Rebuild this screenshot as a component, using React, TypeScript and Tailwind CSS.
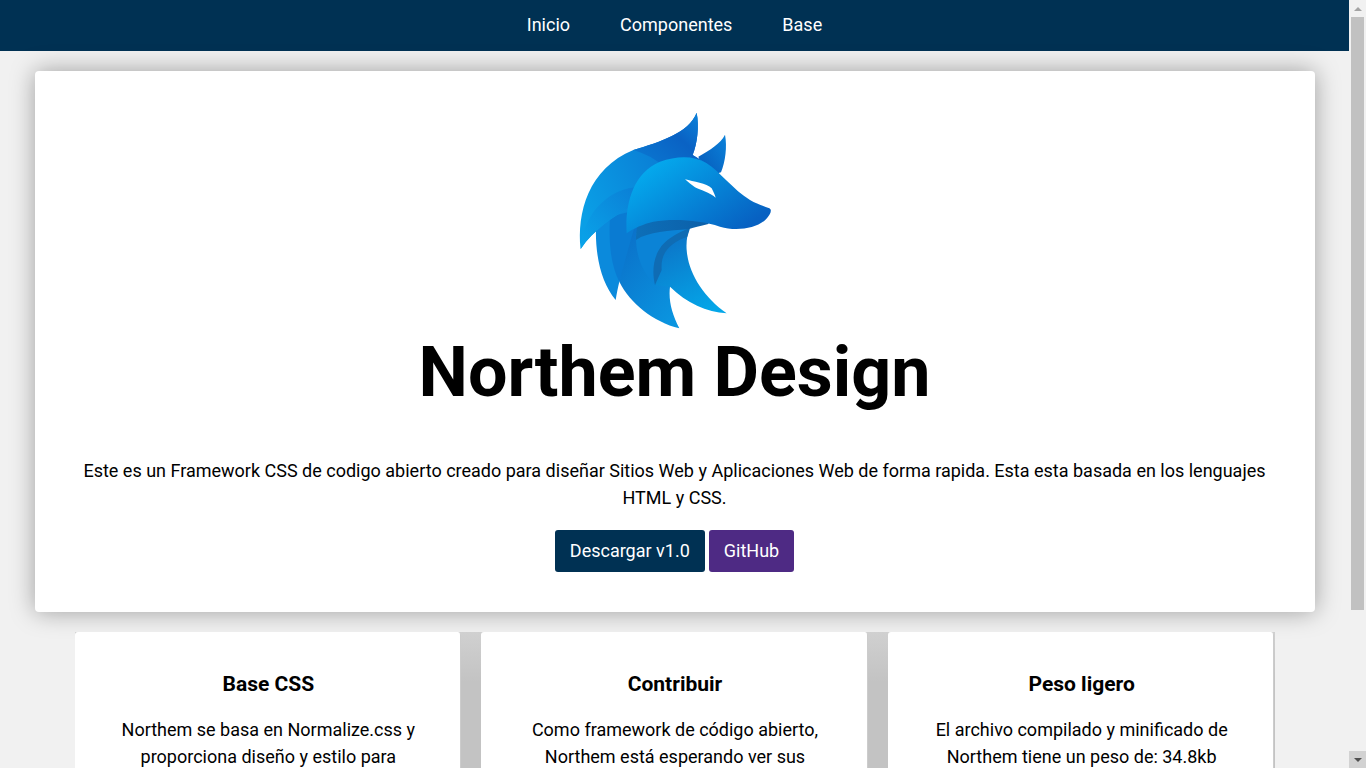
import React from 'react';

const cards = [
  {
    title: 'Base CSS',
    text: 'Northem se basa en Normalize.css y proporciona diseño y estilo para todos los elementos HTML de tu sitio web.',
  },
  {
    title: 'Contribuir',
    text: 'Como framework de código abierto, Northem está esperando ver sus contribuciones en nuestro repositorio.',
  },
  {
    title: 'Peso ligero',
    text: 'El archivo compilado y minificado de Northem tiene un peso de: 34.8kb',
  },
];

const FoxLogo: React.FC = () => (
  <svg viewBox="0 0 690 720" className="block w-[230px] h-[240px]">
    <defs>
      <linearGradient id="mane" x1="0" y1="0.7" x2="1" y2="0.2">
        <stop offset="0" stopColor="#0a9fe6" />
        <stop offset="1" stopColor="#0a6dcc" />
      </linearGradient>
      <linearGradient id="maneLight" x1="0" y1="1" x2="1" y2="0">
        <stop offset="0" stopColor="#09a5ea" />
        <stop offset="1" stopColor="#0b7fd6" />
      </linearGradient>
      <linearGradient id="maneDark" x1="0" y1="0.8" x2="1" y2="0">
        <stop offset="0" stopColor="#0a76d0" />
        <stop offset="0.55" stopColor="#0a62c4" />
        <stop offset="1" stopColor="#0b86dc" />
      </linearGradient>
      <linearGradient id="head" x1="0.05" y1="0.1" x2="0.95" y2="0.75">
        <stop offset="0" stopColor="#04b0f1" />
        <stop offset="1" stopColor="#0761c2" />
      </linearGradient>
      <linearGradient id="ear" x1="0" y1="1" x2="1" y2="0">
        <stop offset="0" stopColor="#0558b8" />
        <stop offset="1" stopColor="#0b82da" />
      </linearGradient>
      <linearGradient id="feather" x1="0.2" y1="0" x2="0.8" y2="1">
        <stop offset="0" stopColor="#0b6fc8" />
        <stop offset="1" stopColor="#0a95e0" />
      </linearGradient>
      <linearGradient id="chest" x1="0.3" y1="0" x2="0.7" y2="1">
        <stop offset="0" stopColor="#0d6fc4" />
        <stop offset="1" stopColor="#04a6e8" />
      </linearGradient>
      <linearGradient id="band" x1="0" y1="0.5" x2="1" y2="0.5">
        <stop offset="0" stopColor="#0d6fb8" />
        <stop offset="1" stopColor="#0c5fa8" />
      </linearGradient>
    </defs>
    <path d="M415 170C450 150 482 130 495 104C502 140 496 185 483 217L440 230Z" fill="url(#ear)" />
    <path d="M108 380C105 470 125 550 167 600C170 580 174 562 178 545L260 380L200 300Z" fill="#0b8adc" />
    <path d="M150 350C145 440 155 500 178 545L230 420L230 330Z" fill="#0a7bd2" />
    <path d="M178 545C210 610 280 665 358 685C335 640 325 600 330 560L340 420L230 360C215 410 195 480 178 545Z" fill="url(#feather)" />
    <path d="M285 555L330 560C380 610 440 635 500 640C430 590 385 520 380 450C378 425 382 400 390 380L300 370Z" fill="url(#chest)" />
    <path d="M228 400C225 470 250 520 285 555C300 520 290 470 320 430L390 385L300 370Z" fill="#0b83d6" />
    <path d="M285 555C272 500 285 445 330 415C350 400 370 392 390 385L382 410C340 425 300 450 305 510Z" fill="#0f6cb4" />
    <path d="M228 420C228 405 230 392 235 340L450 340L445 372C420 378 400 382 385 388C330 392 265 395 228 420Z" fill="url(#band)" />
    <path d="M62 447C50 340 85 205 220 150C300 125 385 100 410 38C418 80 412 130 398 165L440 190L300 340L205 325C160 350 100 390 62 447Z" fill="url(#mane)" />
    <path d="M220 150C300 125 385 100 410 38C418 80 412 130 398 165L430 185L300 190C275 170 250 160 220 150Z" fill="url(#maneDark)" />
    <path d="M62 447C65 370 120 275 225 262L205 325C160 350 100 390 62 447Z" fill="url(#maneLight)" />
    <path d="M200 400C195 320 215 220 300 185C350 168 400 165 440 190C480 215 520 270 570 300C590 312 610 318 628 325C638 330 630 345 618 358C590 385 530 395 480 380C420 360 340 355 280 365C250 372 220 385 200 400Z" fill="url(#head)" />
    <path d="M375 238C400 245 440 250 455 265C460 275 465 285 467 293C450 278 420 270 405 262C395 255 385 247 375 238Z" fill="#ffffff" />
  </svg>
);

const Scrollbar: React.FC = () => (
  <div className="w-[17px] h-full shrink-0 bg-[#f1f1f1] flex flex-col">
    <div className="h-[17px] flex items-center justify-center">
      <div className="w-0 h-0 border-x-[4px] border-x-transparent border-b-[4px] border-b-[#a3a3a3]" />
    </div>
    <div className="flex-1 px-[2px]">
      <div className="h-[593px] bg-[#c1c1c1]" />
    </div>
    <div className="h-[17px] bg-[#d2d2d2] flex items-center justify-center">
      <div className="w-0 h-0 border-x-[4px] border-x-transparent border-t-[4px] border-t-[#505050]" />
    </div>
  </div>
);

export default function App() {
  return (
    <div className="h-screen flex overflow-hidden bg-[#f1f1f1] text-black font-['Roboto',sans-serif] text-[18px] leading-[27px]">
      <div className="flex-1 min-w-0 h-full overflow-hidden">
        <nav className="h-[51px] bg-[#003153] flex items-center justify-center gap-[50px] text-white pb-[2px]">
          <a href="#">Inicio</a>
          <a href="#">Componentes</a>
          <a href="#">Base</a>
        </nav>

        <main className="flex flex-col items-center pt-5 pb-10">
          <section className="w-[1280px] h-[541px] shrink-0 bg-white rounded-[4px] shadow-[0_0_25px_rgba(0,0,0,0.35)] flex flex-col items-center pt-[29px] px-[40px] text-center">
            <FoxLogo />
            <h1 className="text-[70px] leading-[84px] font-bold -mt-[10px]">Northem Design</h1>
            <p className="mt-[43px]">
              Este es un Framework CSS de codigo abierto creado para diseñar Sitios Web y Aplicaciones Web de forma rapida. Esta esta basada en los lenguajes HTML y CSS.
            </p>
            <div className="flex gap-1 mt-[19px]">
              <a href="#" className="h-[42px] px-[15px] pb-[2px] flex items-center rounded-[3px] bg-[#003153] text-white">Descargar v1.0</a>
              <a href="#" className="h-[42px] px-[15px] pb-[2px] flex items-center rounded-[3px] bg-[#4e2a84] text-white">GitHub</a>
            </div>
          </section>

          <section className="w-[1200px] shrink-0 grid grid-cols-3 gap-5 mt-5 bg-gradient-to-b from-[#d0d0d0] to-[#c3c3c3] to-[50px]">
            {cards.map((card) => (
              <div key={card.title} className="bg-white rounded-[3px] border-r border-[#cccccc] pl-[41px] pr-[39px] pt-[39px] pb-10 text-center h-[278px]">
                <h3 className="text-[21px] leading-[27px] font-bold">{card.title}</h3>
                <p className="mt-[18px]">{card.text}</p>
              </div>
            ))}
          </section>
        </main>
      </div>
      <Scrollbar />
    </div>
  );
}
